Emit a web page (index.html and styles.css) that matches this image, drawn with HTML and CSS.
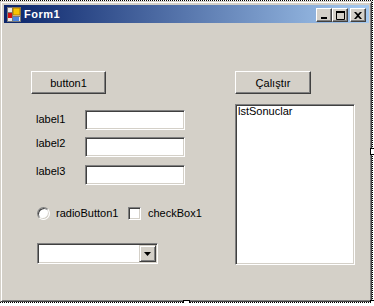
FILE: index.html
```html
<!DOCTYPE html>
<html lang="tr">
<head>
  <meta charset="utf-8">
  <title>Form1</title>
  <link rel="stylesheet" href="styles.css">
</head>
<body>
  <div class="frame">
    <div class="window">
      <div class="titlebar">
        <svg class="app-icon" width="14" height="15" viewBox="0 0 14 15">
          <rect x="0.5" y="0.5" width="13" height="14" fill="#e8e8e8" stroke="#7a7a7a"/>
          <path d="M0.5 5.5H5.5M5.5 0.5V14.5M5.5 9.5H13.5" stroke="#7a7a7a"/>
          <rect x="6" y="1" width="7" height="7" fill="#f7c600" stroke="#b07800" stroke-width="1"/>
          <rect x="1" y="6" width="4" height="5" fill="#d01010"/>
          <rect x="6" y="10" width="6" height="4" fill="#4c86e0"/>
        </svg>
        <span class="title">Form1</span>
        <div class="caption-buttons">
          <span class="cap-btn">
            <svg width="8" height="7" viewBox="0 0 8 7"><rect x="1" y="5" width="6" height="2" fill="#000"/></svg>
          </span>
          <span class="cap-btn">
            <svg width="9" height="9" viewBox="0 0 9 9"><path d="M0.5 1.5H8.5V8.5H0.5Z" fill="none" stroke="#000"/><rect x="0" y="0" width="9" height="2" fill="#000"/></svg>
          </span>
          <span class="cap-btn cap-close">
            <svg width="8" height="7" viewBox="0 0 8 7"><path d="M0 0h2l2 2 2-2h2L5 3.5 8 7H6L4 5 2 7H0l3-3.5z" fill="#000"/></svg>
          </span>
        </div>
      </div>

      <div class="client">
        <div class="col-left">
          <div class="btn btn-button1">button1</div>

          <div class="fields">
            <div class="field">
              <span class="label label-1">label1</span>
              <span class="textbox sunken"></span>
            </div>
            <div class="field">
              <span class="label">label2</span>
              <span class="textbox sunken"></span>
            </div>
            <div class="field field-3">
              <span class="label">label3</span>
              <span class="textbox sunken"></span>
            </div>
          </div>

          <div class="options">
            <div class="option-radio">
              <span class="radio sunken"></span>
              <span class="opt-text">radioButton1</span>
            </div>
            <span class="check sunken"></span>
            <span class="opt-text opt-check">checkBox1</span>
          </div>

          <div class="combo sunken">
            <span class="drop">
              <svg width="7" height="4" viewBox="0 0 7 4"><path d="M0 0H7L3.5 4Z" fill="#000"/></svg>
            </span>
          </div>
        </div>

        <div class="col-right">
          <div class="btn btn-run">Çalıştır</div>
          <div class="listbox sunken">lstSonuclar</div>
        </div>
      </div>
    </div>
    <span class="handle handle-right"></span>
    <span class="handle handle-bottom"></span>
    <span class="handle handle-corner"></span>
  </div>
</body>
</html>
```

FILE: styles.css
```css
body {
  margin: 0;
  background: #fff;
  color: #000;
  font-family: "Liberation Sans", Arial, sans-serif;
  font-size: 11px;
}

.frame {
  position: relative;
  width: 372px;
  height: 301px;
  border-top: 1px dotted #000;
  border-right: 1px dotted #000;
  border-bottom: 1px dotted #000;
}

.window {
  box-sizing: border-box;
  width: 372px;
  height: 301px;
  padding: 3px 2px 3px 3px;
  background: #d4d0c8;
  border: 1px solid;
  border-color: #d4d0c8 #404040 #404040 #d4d0c8;
  box-shadow: inset 1px 1px #fff, inset -1px -1px #808080;
}

/* title bar */
.titlebar {
  display: flex;
  align-items: flex-start;
  height: 18px;
  background: linear-gradient(to right, #0a246a, #a6caf0);
}
.app-icon {
  display: block;
  margin: 2px 0 0 3px;
}
.title {
  margin-left: 3px;
  color: #fff;
  font-weight: bold;
  font-size: 11px;
  line-height: 18px;
  letter-spacing: 0.5px;
}
.caption-buttons {
  display: flex;
  margin-left: auto;
  padding: 3px 3px 0 0;
}
.cap-btn {
  box-sizing: border-box;
  display: flex;
  align-items: center;
  justify-content: center;
  width: 16px;
  height: 14px;
  background: #d4d0c8;
  border: 1px solid;
  border-color: #fff #404040 #404040 #fff;
  box-shadow: inset -1px -1px #808080;
}
.cap-btn svg {
  display: block;
}
.cap-close {
  margin-left: 2px;
}

/* client area */
.client {
  display: flex;
  padding: 48px 0 0 27px;
}
.col-left {
  width: 204px;
}
.col-right {
  display: flex;
  flex-direction: column;
}

.btn {
  box-sizing: border-box;
  display: flex;
  align-items: center;
  justify-content: center;
  height: 23px;
  background: #d4d0c8;
  border: 1px solid;
  border-color: #fff #404040 #404040 #fff;
  box-shadow: inset -1px -1px #808080;
}
.btn-button1 {
  width: 75px;
}
.btn-run {
  width: 76px;
}

.sunken {
  box-sizing: border-box;
  background: #fff;
  border: 1px solid;
  border-color: #808080 #fff #fff #808080;
  box-shadow: inset 1px 1px #404040, inset -1px -1px #d4d0c8;
}

.fields {
  margin-top: 16px;
}
.field {
  display: flex;
  height: 20px;
}
.field + .field {
  margin-top: 7px;
}
.field.field-3 {
  margin-top: 8px;
}
.label {
  width: 49px;
  padding-left: 5px;
  line-height: 13px;
}
.label-1 {
  padding-top: 3px;
}
.textbox {
  width: 100px;
  height: 20px;
}

.options {
  display: flex;
  align-items: center;
  height: 13px;
  margin-top: 22px;
}
.option-radio {
  display: flex;
  align-items: center;
  width: 91px;
  margin-left: 6px;
}
.radio {
  width: 13px;
  height: 13px;
  border-radius: 50%;
}
.opt-text {
  margin-left: 6px;
  line-height: 13px;
}
.check {
  width: 13px;
  height: 13px;
}
.opt-check {
  margin-left: 7px;
}

.combo {
  display: flex;
  justify-content: flex-end;
  width: 121px;
  height: 21px;
  margin: 23px 0 0 6px;
  padding: 1px;
}
.drop {
  box-sizing: border-box;
  display: flex;
  align-items: center;
  justify-content: center;
  width: 17px;
  height: 17px;
  background: #d4d0c8;
  border: 1px solid;
  border-color: #d4d0c8 #404040 #404040 #d4d0c8;
  box-shadow: inset 1px 1px #fff, inset -1px -1px #808080;
}
.drop svg {
  display: block;
}

.listbox {
  width: 120px;
  height: 161px;
  margin-top: 10px;
  padding: 0 2px;
  line-height: 13px;
}

/* designer selection handles */
.handle {
  position: absolute;
  width: 5px;
  height: 5px;
  background: #fff;
  border: 1px solid #000;
}
.handle-right {
  left: 370px;
  top: 147px;
}
.handle-bottom {
  left: 183px;
  top: 299px;
}
.handle-corner {
  left: 370px;
  top: 299px;
}
```
